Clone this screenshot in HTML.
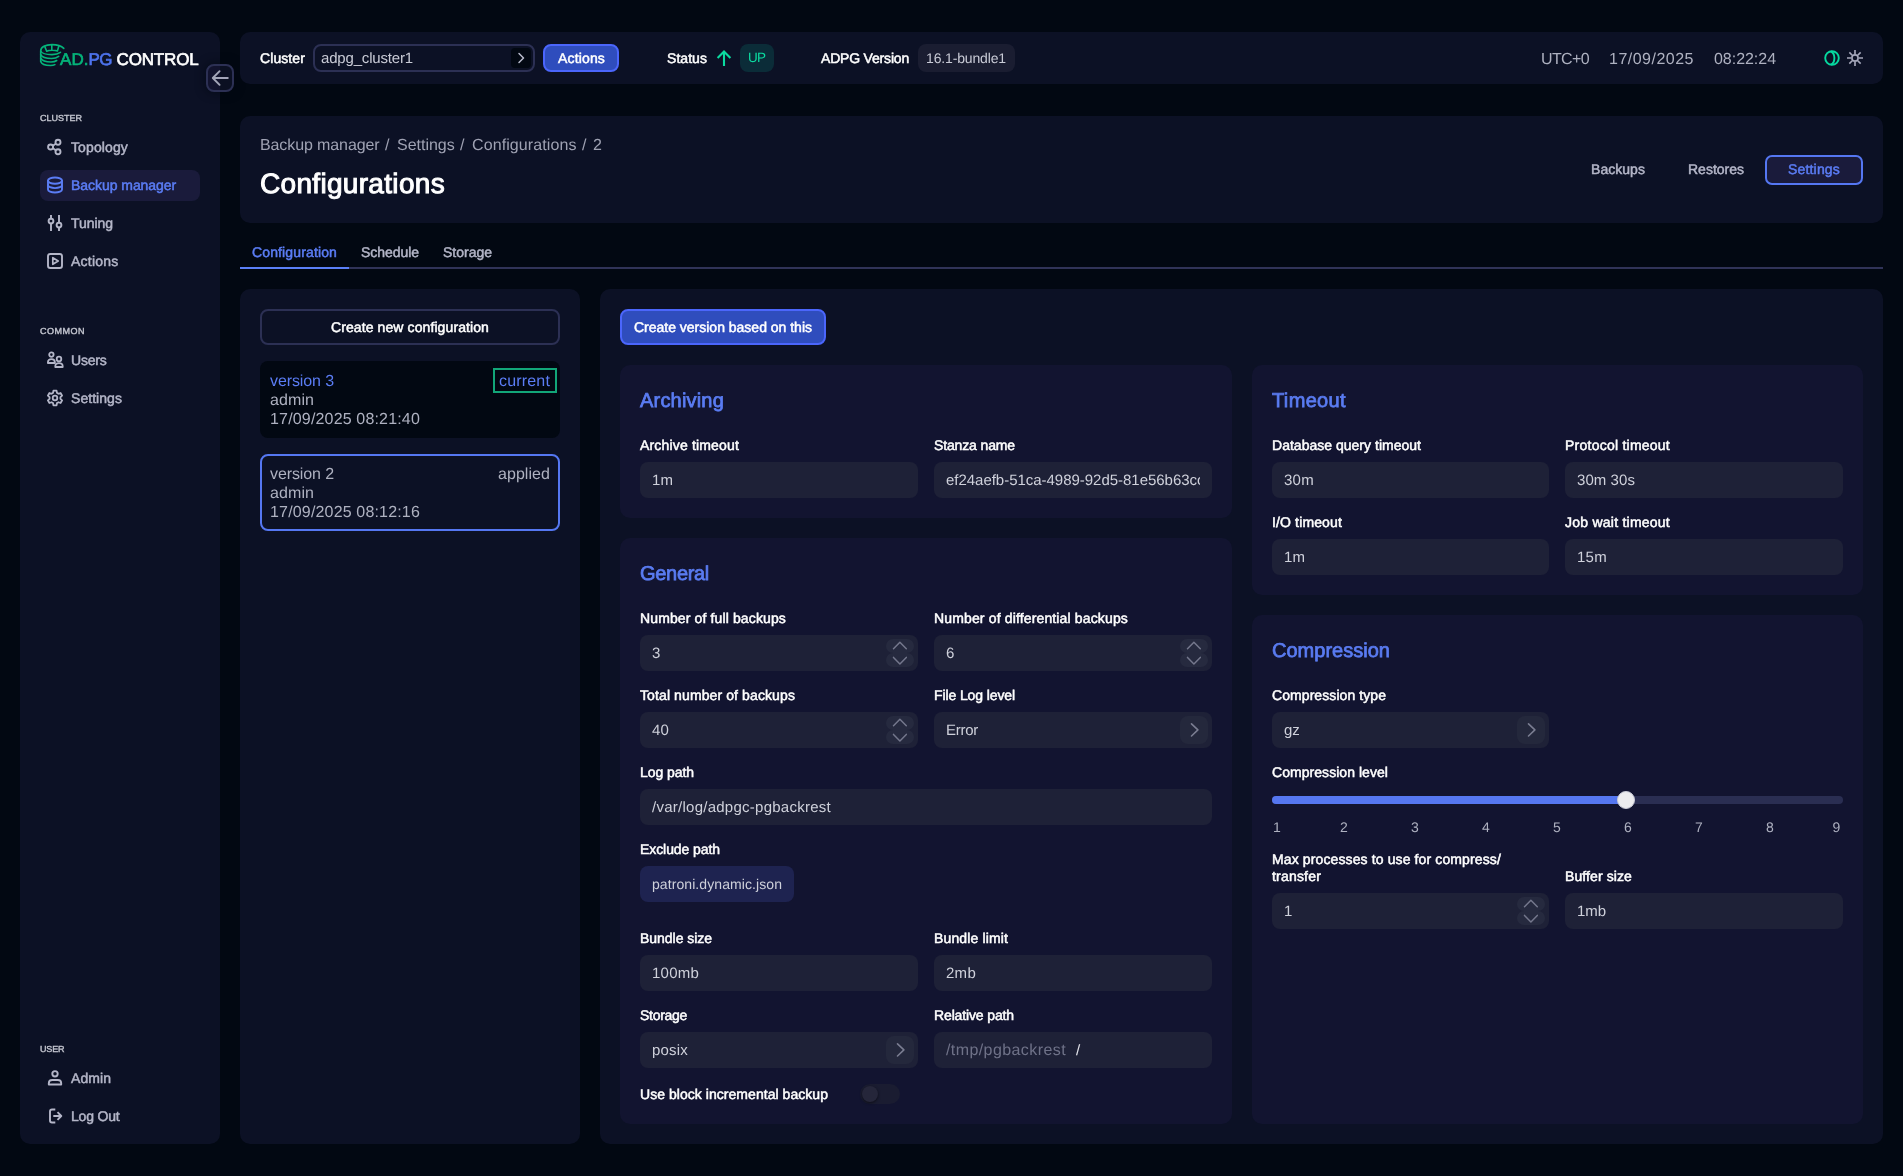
<!DOCTYPE html>
<html lang="en">
<head>
<meta charset="utf-8">
<title>ADPG Control - Configurations</title>
<style>
*{box-sizing:border-box;margin:0;padding:0}
html,body{width:1903px;height:1176px;overflow:hidden}
body{will-change:transform;text-rendering:geometricPrecision;background:#020812;font-family:"Liberation Sans",sans-serif;color:#d3d5de;position:relative;font-size:15px}
.abs{position:absolute}
.panel{position:absolute;background:#0c1125;border-radius:10px}
.card{position:absolute;background:#121430;border-radius:10px}
svg{display:block}
/* sidebar */
#sidebar{left:20px;top:32px;width:200px;height:1112px}
.sec{position:absolute;left:20px;font-size:10px;font-weight:normal;-webkit-text-stroke:0.45px currentColor;color:#c3c5cf;line-height:12px;transform:scale(.9,.875);transform-origin:0 50%}
.mi{position:absolute;left:20px;width:160px;height:31px;border-radius:8px;color:#b4b6c8;font-size:14px;font-weight:normal;-webkit-text-stroke:0.5px currentColor;line-height:30px;padding-left:31px;white-space:nowrap}
.mi svg{position:absolute;left:6px;top:6px;width:18px;height:18px}
.mi.act{background:#1a1b3b;color:#5b7df5}
.med{font-weight:normal;-webkit-text-stroke:0.5px currentColor}
.t{position:absolute;white-space:nowrap}
/* topbar */
#topbar{left:240px;top:32px;width:1643px;height:52px}
.tb{position:absolute;top:0;height:52px;line-height:52px;white-space:nowrap}
.tbb{font-weight:bold;color:#fff;font-size:14.5px}
.badge{position:absolute;top:12px;height:28px;line-height:28px;border-radius:7px;font-size:14px;text-align:center;white-space:nowrap}
/* header */
#header{left:240px;top:116px;width:1643px;height:107px}
.bc{top:20px;font-size:16px;line-height:20px;color:#9fa2b3}
/* fields */
.lbl{font-size:14px;color:#fff;line-height:17px}
.inp{position:absolute;height:36px;border-radius:8px;background:#1e2137;color:#cfd1db;font-size:15px;line-height:38px;padding-left:12px;white-space:nowrap;overflow:hidden}
.h2{position:absolute;left:20px;top:24px;font-size:20px;color:#5a7cf2;line-height:24px;white-space:nowrap;-webkit-text-stroke:0.75px currentColor}
.spin{position:absolute;right:4px;top:4px;width:28px;height:28px}
.chev{position:absolute;right:4px;top:4px;width:28px;height:28px;border-radius:8px;background:#24283c}
</style>
</head>
<body>

<!-- SIDEBAR -->
<div id="sidebar" class="panel">
  <!-- logo -->
  <svg class="abs" style="left:19px;top:11px" width="26" height="24" viewBox="0 0 26 24" fill="none" stroke="#05b47a" stroke-width="1.600" stroke-linecap="round" stroke-linejoin="round">
    <path d="M1.700 18.500V8C1.700 4 6.500 1.600 13 1.600c5 0 9.500 1.400 11.800 3.800"/>
    <path d="M1.700 8c1.300 2.500 6.300 3.600 11.300 3.600 3.500 0 6.500-.9 8.500-2.300"/>
    <path d="M1.700 11.600c1.300 2.500 6.300 3.900 10.800 3.900 3 0 5.500-.8 7.200-2.100"/>
    <path d="M1.700 15.100c1.300 2.500 5.800 3.900 10.300 3.900 2.500 0 4.500-.6 5.700-1.500"/>
    <path d="M1.700 18.500c.8 2.500 5.300 4 9.800 4 2 0 3.500-.4 4.400-.9"/>
    <path d="M12.800 2v5M5.700 3.400l2 4.800M19.700 3.500l-1.300 4.500M7.700 8.200c2.300-1.200 8.300-1.200 10.700-.2"/>
  </svg>
  <div class="abs" id="logo" style="left:40px;top:18px;font-size:17px;line-height:20px;white-space:nowrap;-webkit-text-stroke:0.65px currentColor"><span style="letter-spacing:0.052px;color:#05b47a">AD.</span><span style="letter-spacing:-0.531px;color:#4e74ef">PG</span><span style="letter-spacing:-0.168px;color:#fff"> CONTROL</span></div>

  <div class="sec" style="letter-spacing:-0.003px;top:81px">CLUSTER</div>
  <div class="mi" style="top:100px">
    <svg viewBox="0 0 18 18" fill="none" stroke="currentColor" stroke-width="1.9"><circle cx="12" cy="4.2" r="2.5"/><circle cx="4.6" cy="9" r="2.5"/><circle cx="12" cy="13.8" r="2.5"/><path d="M6.8 7.7l3-2M6.8 10.300l3 2"/></svg><span style="letter-spacing:0.119px">Topology</span></div>
  <div class="mi act" style="top:138px">
    <svg viewBox="0 0 18 18" fill="none" stroke="currentColor" stroke-width="1.9" stroke-linecap="round"><ellipse cx="9" cy="4.6" rx="7" ry="3.1"/><path d="M2 4.6v8.800c0 1.700 3.100 3.100 7 3.100s7-1.400 7-3.100V4.600"/><path d="M2 9c0 1.700 3.100 3.100 7 3.100s7-1.400 7-3.100"/></svg><span style="letter-spacing:-0.046px">Backup manager</span></div>
  <div class="mi" style="top:176px">
    <svg viewBox="0 0 18 18" fill="none" stroke="currentColor" stroke-width="1.9" stroke-linecap="butt"><path d="M5 1v3.600M5 9.600V17M13 1v7.600M13 13.600V17"/><circle cx="5" cy="7.100" r="2.400"/><circle cx="13" cy="11.100" r="2.400"/></svg><span style="letter-spacing:-0.033px">Tuning</span></div>
  <div class="mi" style="top:214px">
    <svg viewBox="0 0 18 18" fill="none" stroke="currentColor" stroke-width="1.9" stroke-linejoin="round"><rect x="2" y="2" width="14" height="14" rx="2.300"/><path d="M6.800 5.700v6.600l5.400-3.300z" stroke-width="1.700"/></svg><span style="letter-spacing:0.225px">Actions</span></div>

  <div class="sec" style="letter-spacing:0.555px;top:294px">COMMON</div>
  <div class="mi" style="top:313px">
    <svg viewBox="0 0 18 18" fill="none" stroke="currentColor" stroke-width="1.800" stroke-linejoin="round"><circle cx="5.400" cy="3.600" r="2.200"/><path d="M1.900 12v-.7c0-1.900 1.500-3.100 3.500-3.100s3.500 1.200 3.500 3.100v.7z"/><circle cx="13" cy="8" r="2.300"/><path d="M9.300 16v-.7c0-1.900 1.600-3.100 3.700-3.100s3.700 1.200 3.700 3.100v.7z"/></svg><span style="letter-spacing:-0.212px">Users</span></div>
  <div class="mi" style="top:351px">
    <svg viewBox="0 0 18 18" fill="none" stroke="currentColor" stroke-width="1.800" stroke-linejoin="round"><circle cx="9" cy="9" r="2.300"/><path d="M10.97 3.87 L10.56 1.66 L7.44 1.66 L7.03 3.87 L5.54 4.73 L3.43 3.98 L1.87 6.68 L3.57 8.14 L3.57 9.86 L1.87 11.32 L3.43 14.02 L5.54 13.27 L7.03 14.13 L7.44 16.34 L10.56 16.34 L10.97 14.13 L12.46 13.27 L14.57 14.02 L16.13 11.32 L14.43 9.86 L14.43 8.14 L16.13 6.68 L14.57 3.98 L12.46 4.73Z"/></svg><span style="letter-spacing:0.051px">Settings</span></div>

  <div class="sec" style="letter-spacing:-0.144px;top:1012px">USER</div>
  <div class="mi" style="top:1031px">
    <svg viewBox="0 0 18 18" fill="none" stroke="currentColor" stroke-width="1.900" stroke-linejoin="round"><circle cx="9" cy="4.800" r="2.700"/><path d="M2.800 15.500v-1.200c0-1.900 1.500-3.300 3.400-3.300h5.600c1.900 0 3.400 1.400 3.400 3.300v1.200z"/></svg><span style="letter-spacing:0.062px">Admin</span></div>
  <div class="mi" style="top:1069px">
    <svg viewBox="0 0 18 18" fill="none" stroke="currentColor" stroke-width="1.900" stroke-linecap="butt" stroke-linejoin="round"><path d="M9.300 2.500H6c-1.100 0-2 .9-2 2v9c0 1.100.9 2 2 2h3.300"/><path d="M7.300 9h8M11.500 5.200L15.300 9l-3.800 3.800"/></svg><span style="letter-spacing:-0.175px">Log Out</span></div>
</div>
<!-- collapse button -->
<div class="abs" style="left:206px;top:64px;width:28px;height:28px;border-radius:8px;background:linear-gradient(90deg,#12132e 0,#12132e 12px,#0b1022 12px);border:2px solid #2c3054;box-shadow:0 0 8px 2px rgba(2,8,18,.5)">
  <svg width="24" height="24" viewBox="0 0 24 24" fill="none" stroke="#a3a5b8" stroke-width="1.900" stroke-linecap="round" stroke-linejoin="round"><path d="M19.800 12H5M11.600 5.200L4.800 12l6.800 6.800"/></svg>
</div>


<!-- TOPBAR -->
<div id="topbar" class="panel">
  <span class="t med" style="letter-spacing:0.092px;left:20px;top:17px;font-size:14px;line-height:18px;color:#fff">Cluster</span>
  <div class="abs" style="left:73px;top:12px;width:222px;height:28px;border:2px solid #2c3054;border-radius:8px;background:#0c1125"></div>
  <span class="t" style="letter-spacing:-0.172px;left:81px;top:18px;font-size:15px;line-height:18px;color:#c9cbd6">adpg_cluster1</span>
  <div class="abs" style="left:271px;top:16px;width:20px;height:20px;border-radius:4px;background:#020812">
    <svg width="20" height="20" viewBox="0 0 20 20" fill="none" stroke="#b9bccd" stroke-width="1.500" stroke-linecap="round" stroke-linejoin="round"><path d="M8 5.500l4.500 4.500L8 14.500"/></svg>
  </div>
  <div class="abs" style="left:303px;top:12px;width:76px;height:28px;border-radius:8px;background:#2f4dbd;border:2px solid #4b66fc"></div>
  <span class="t med" style="letter-spacing:0.154px;left:318px;top:17px;font-size:14px;line-height:18px;color:#fff">Actions</span>

  <span class="t med" style="letter-spacing:0.049px;left:427px;top:17px;font-size:14px;line-height:18px;color:#fff">Status</span>
  <svg class="abs" style="left:475px;top:17px" width="18" height="18" viewBox="0 0 18 18" fill="none" stroke="#0bdba0" stroke-width="2.100" stroke-linecap="butt" stroke-linejoin="miter"><path d="M9 17.100V2.500M2.600 8.900L9 2.500l6.400 6.400"/></svg>
  <div class="abs" style="left:500px;top:12px;width:34px;height:28px;border-radius:8px;background:#0b2c38"></div>
  <span class="t" style="letter-spacing:-0.633px;left:508px;top:17px;font-size:13.5px;line-height:18px;color:#0bdba0">UP</span>

  <span class="t med" style="letter-spacing:-0.189px;left:581px;top:17px;font-size:14px;line-height:18px;color:#fff">ADPG Version</span>
  <div class="abs" style="left:678px;top:12px;width:97px;height:28px;border-radius:8px;background:#1a1d31"></div>
  <span class="t" style="letter-spacing:-0.146px;left:686px;top:17px;font-size:14px;line-height:18px;color:#c9cbd6">16.1-bundle1</span>

  <span class="t" style="letter-spacing:-0.625px;left:1301px;top:18px;font-size:16px;line-height:20px;color:#aeb1c0">UTC+0</span>
  <span class="t" style="letter-spacing:0.492px;left:1369px;top:18px;font-size:16px;line-height:20px;color:#aeb1c0">17/09/2025</span>
  <span class="t" style="letter-spacing:-0.035px;left:1474px;top:18px;font-size:16px;line-height:20px;color:#aeb1c0">08:22:24</span>

  <svg class="abs" style="left:1583px;top:17px" width="18" height="18" viewBox="0 0 18 18" fill="none" stroke="#06d9a0" stroke-width="1.900"><circle cx="9" cy="9" r="6.800"/><path d="M7.800 2.300C12.600 4.500 12.600 13.500 7.800 15.700"/></svg>
  <svg class="abs" style="left:1606px;top:17px" width="18" height="18" viewBox="0 0 18 18" fill="none" stroke="#a6a8bb" stroke-width="1.650" stroke-linecap="butt"><circle cx="9" cy="9" r="3.100"/><path d="M12.90 9.00L17.00 9.00M11.76 11.76L14.66 14.66M9.00 12.90L9.00 17.00M6.24 11.76L3.34 14.66M5.10 9.00L1.00 9.00M6.24 6.24L3.34 3.34M9.00 5.10L9.00 1.00M11.76 6.24L14.66 3.34"/></svg>
</div>


<!-- HEADER -->
<div id="header" class="panel">
  <span class="t bc" style="letter-spacing:-0.105px;left:20px">Backup manager</span>
  <span class="t bc" style="left:145px">/</span>
  <span class="t bc" style="letter-spacing:-0.014px;left:157px">Settings</span>
  <span class="t bc" style="left:220px">/</span>
  <span class="t bc" style="letter-spacing:0.095px;left:232px">Configurations</span>
  <span class="t bc" style="left:342px">/</span>
  <span class="t bc" style="left:353px">2</span>
  <span class="t" style="letter-spacing:0.317px;left:20px;top:51px;font-size:28px;line-height:34px;color:#fff;-webkit-text-stroke:1px #fff">Configurations</span>
  <span class="t med" style="letter-spacing:0.042px;left:1351px;top:44px;font-size:14px;line-height:18px;color:#b4b6c8">Backups</span>
  <span class="t med" style="letter-spacing:-0.004px;left:1448px;top:44px;font-size:14px;line-height:18px;color:#b4b6c8">Restores</span>
  <div class="abs" style="left:1525px;top:39px;width:98px;height:30px;border-radius:7px;border:2px solid #5577f2;background:#1a1b3b"></div>
  <span class="t med" style="letter-spacing:0.176px;left:1548px;top:44px;font-size:14px;line-height:18px;color:#5b7df5">Settings</span>
</div>


<!-- TABS -->
<div id="tabs" class="abs" style="left:240px;top:236px;width:1643px;height:33px">
  <div class="abs" style="left:0;top:31px;width:1643px;height:2px;background:#303358"></div>
  <div class="abs" style="left:0;top:31px;width:109px;height:2px;background:#5b80f8"></div>
  <span class="t med" style="letter-spacing:0.132px;left:12px;top:7px;font-size:14px;line-height:18px;color:#5b7df5">Configuration</span>
  <span class="t med" style="letter-spacing:-0.049px;left:121px;top:7px;font-size:14px;line-height:18px;color:#b4b6c8">Schedule</span>
  <span class="t med" style="letter-spacing:-0.007px;left:203px;top:7px;font-size:14px;line-height:18px;color:#b4b6c8">Storage</span>
</div>


<!-- LEFT PANEL -->
<div id="left" class="panel" style="left:240px;top:289px;width:340px;height:855px;border-top:1px solid transparent">
  <div class="abs" style="left:20px;top:19px;width:300px;height:36px;border:2px solid #2c3054;border-radius:8px"></div>
  <span class="t med" style="letter-spacing:0.098px;left:91px;top:28px;font-size:14px;line-height:18px;color:#fff">Create new configuration</span>

  <div class="abs" style="left:20px;top:71px;width:300px;height:77px;border-radius:8px;background:#020812"></div>
  <span class="t" style="letter-spacing:-0.102px;left:30px;top:82px;font-size:16px;line-height:20px;color:#5b7df5">version 3</span>
  <div class="abs" style="left:253px;top:78px;width:64px;height:25px;border:2px solid #12a678"></div>
  <span class="t" style="letter-spacing:0.172px;left:259px;top:82px;font-size:16px;line-height:20px;color:#5b7df5">current</span>
  <span class="t" style="letter-spacing:0.084px;left:30px;top:101px;font-size:16px;line-height:20px;color:#aeb1c0">admin</span>
  <span class="t" style="letter-spacing:0.168px;left:30px;top:120px;font-size:16px;line-height:20px;color:#aeb1c0">17/09/2025 08:21:40</span>

  <div class="abs" style="left:20px;top:164px;width:300px;height:77px;border-radius:8px;border:2px solid #5577f2"></div>
  <span class="t" style="letter-spacing:-0.102px;left:30px;top:175px;font-size:16px;line-height:20px;color:#aeb1c0">version 2</span>
  <span class="t" style="letter-spacing:0.056px;left:258px;top:175px;font-size:16px;line-height:20px;color:#aeb1c0">applied</span>
  <span class="t" style="letter-spacing:0.084px;left:30px;top:194px;font-size:16px;line-height:20px;color:#aeb1c0">admin</span>
  <span class="t" style="letter-spacing:0.168px;left:30px;top:213px;font-size:16px;line-height:20px;color:#aeb1c0">17/09/2025 08:12:16</span>
</div>


<!-- RIGHT PANEL -->
<div id="right" class="panel" style="left:600px;top:289px;width:1283px;height:855px;border-top:1px solid transparent">
  <div class="abs" style="left:20px;top:19px;width:206px;height:36px;border-radius:8px;background:#2f4dbd;border:2px solid #4b66fc"></div>
  <span class="t med" style="letter-spacing:-0.008px;left:34px;top:28px;font-size:14px;line-height:18px;color:#fff">Create version based on this</span>
<div class="card" style="left:20px;top:75px;width:612px;height:153px">
  <span class="h2 med" style="letter-spacing:0.193px">Archiving</span>
  <span class="t med lbl" style="letter-spacing:0.168px;left:20px;top:72px">Archive timeout</span>
  <div class="inp" style="left:20px;top:97px;width:278px"><span style="letter-spacing:0.078px">1m</span></div>
  <span class="t med lbl" style="letter-spacing:-0.136px;left:314px;top:72px">Stanza name</span>
  <div class="inp" style="left:314px;top:97px;width:278px"><div style="width:254px;overflow:hidden"><span style="letter-spacing:-0.026px">ef24aefb-51ca-4989-92d5-81e56b63cc11</span></div></div>
</div>
<div class="card" style="left:20px;top:248px;width:612px;height:586px">
  <span class="h2 med" style="letter-spacing:-0.308px">General</span>
  <span class="t med lbl" style="letter-spacing:0.128px;left:20px;top:72px">Number of full backups</span>
  <div class="inp" style="left:20px;top:97px;width:278px"><span style="letter-spacing:-0.344px">3</span><svg class="spin" viewBox="0 0 28 28" fill="none" stroke="#74778c" stroke-width="1.500" stroke-linecap="round" stroke-linejoin="round"><rect x="0" y="0" width="28" height="14" rx="7" fill="#262a3f" stroke="none"/><rect x="0" y="14" width="28" height="14" rx="7" fill="#262a3f" stroke="none"/><path d="M7.500 9.800l6.400-6.600 6.400 6.600M7.500 18.400l6.400 6.600 6.400-6.600"/></svg></div>
  <span class="t med lbl" style="letter-spacing:0.146px;left:314px;top:72px">Number of differential backups</span>
  <div class="inp" style="left:314px;top:97px;width:278px"><span style="letter-spacing:-0.344px">6</span><svg class="spin" viewBox="0 0 28 28" fill="none" stroke="#74778c" stroke-width="1.500" stroke-linecap="round" stroke-linejoin="round"><rect x="0" y="0" width="28" height="14" rx="7" fill="#262a3f" stroke="none"/><rect x="0" y="14" width="28" height="14" rx="7" fill="#262a3f" stroke="none"/><path d="M7.500 9.800l6.400-6.600 6.400 6.600M7.500 18.400l6.400 6.600 6.400-6.600"/></svg></div>
  <span class="t med lbl" style="letter-spacing:0.107px;left:20px;top:149px">Total number of backups</span>
  <div class="inp" style="left:20px;top:174px;width:278px"><span style="letter-spacing:0.156px">40</span><svg class="spin" viewBox="0 0 28 28" fill="none" stroke="#74778c" stroke-width="1.500" stroke-linecap="round" stroke-linejoin="round"><rect x="0" y="0" width="28" height="14" rx="7" fill="#262a3f" stroke="none"/><rect x="0" y="14" width="28" height="14" rx="7" fill="#262a3f" stroke="none"/><path d="M7.500 9.800l6.400-6.600 6.400 6.600M7.500 18.400l6.400 6.600 6.400-6.600"/></svg></div>
  <span class="t med lbl" style="letter-spacing:-0.107px;left:314px;top:149px">File Log level</span>
  <div class="inp" style="left:314px;top:174px;width:278px"><span style="letter-spacing:-0.269px">Error</span><div class="chev"><svg width="28" height="28" viewBox="0 0 28 28" fill="none" stroke="#7a7d91" stroke-width="1.600" stroke-linecap="round" stroke-linejoin="round"><path d="M11.500 7.800l6.400 6.100-6.400 6.100"/></svg></div></div>
  <span class="t med lbl" style="letter-spacing:-0.062px;left:20px;top:226px">Log path</span>
  <div class="inp" style="left:20px;top:251px;width:572px"><span style="letter-spacing:0.256px">/var/log/adpgc-pgbackrest</span></div>
  <span class="t med lbl" style="letter-spacing:-0.079px;left:20px;top:303px">Exclude path</span>
  <div class="inp" style="left:20px;top:328px;width:154px;background:#1e2350;font-size:14px;line-height:36px"><span style="letter-spacing:0.080px">patroni.dynamic.json</span></div>
  <span class="t med lbl" style="letter-spacing:-0.036px;left:20px;top:392px">Bundle size</span>
  <div class="inp" style="left:20px;top:417px;width:278px"><span style="letter-spacing:0.225px">100mb</span></div>
  <span class="t med lbl" style="letter-spacing:0.135px;left:314px;top:392px">Bundle limit</span>
  <div class="inp" style="left:314px;top:417px;width:278px"><span style="letter-spacing:0.271px">2mb</span></div>
  <span class="t med lbl" style="letter-spacing:-0.292px;left:20px;top:469px">Storage</span>
  <div class="inp" style="left:20px;top:494px;width:278px"><span style="letter-spacing:0.194px">posix</span><div class="chev"><svg width="28" height="28" viewBox="0 0 28 28" fill="none" stroke="#7a7d91" stroke-width="1.600" stroke-linecap="round" stroke-linejoin="round"><path d="M11.500 7.800l6.400 6.100-6.400 6.100"/></svg></div></div>
  <span class="t med lbl" style="letter-spacing:-0.132px;left:314px;top:469px">Relative path</span>
  <div class="inp" style="left:314px;top:494px;width:278px"><span style="letter-spacing:0.411px;color:#6f7288;font-size:16px">/tmp/pgbackrest</span><span style="color:#e4e5ec;margin-left:10px">/</span></div>
  <span class="t med lbl" style="letter-spacing:0.044px;left:20px;top:548px">Use block incremental backup</span>
  <div class="abs" style="left:240px;top:546px;width:40px;height:20px;border-radius:10px;background:#1a1c31"></div>
  <div class="abs" style="left:242px;top:548px;width:16px;height:16px;border-radius:8px;background:#25263a;box-shadow:0 1px 3px rgba(0,0,0,.55)"></div>
</div>
<div class="card" style="left:652px;top:75px;width:611px;height:230px">
  <span class="h2 med" style="letter-spacing:0.355px">Timeout</span>
  <span class="t med lbl" style="letter-spacing:0.016px;left:20px;top:72px">Database query timeout</span>
  <div class="inp" style="left:20px;top:97px;width:277px"><span style="letter-spacing:0.271px">30m</span></div>
  <span class="t med lbl" style="letter-spacing:0.239px;left:313px;top:72px">Protocol timeout</span>
  <div class="inp" style="left:313px;top:97px;width:278px"><span style="letter-spacing:0.065px">30m 30s</span></div>
  <span class="t med lbl" style="letter-spacing:0.139px;left:20px;top:149px">I/O timeout</span>
  <div class="inp" style="left:20px;top:174px;width:277px"><span style="letter-spacing:0.078px">1m</span></div>
  <span class="t med lbl" style="letter-spacing:0.239px;left:313px;top:149px">Job wait timeout</span>
  <div class="inp" style="left:313px;top:174px;width:278px"><span style="letter-spacing:0.271px">15m</span></div>
</div>
<div class="card" style="left:652px;top:325px;width:611px;height:509px">
  <span class="h2 med" style="letter-spacing:0.016px">Compression</span>
  <span class="t med lbl" style="letter-spacing:0.073px;left:20px;top:72px">Compression type</span>
  <div class="inp" style="left:20px;top:97px;width:277px"><span style="letter-spacing:-0.172px">gz</span><div class="chev"><svg width="28" height="28" viewBox="0 0 28 28" fill="none" stroke="#7a7d91" stroke-width="1.600" stroke-linecap="round" stroke-linejoin="round"><path d="M11.500 7.800l6.400 6.100-6.400 6.100"/></svg></div></div>
  <span class="t med lbl" style="letter-spacing:0.049px;left:20px;top:149px">Compression level</span>
  <div class="abs" style="left:20px;top:181px;width:571px;height:8px;border-radius:4px;background:#2a2e52"></div>
  <div class="abs" style="left:20px;top:181px;width:358px;height:8px;border-radius:4px;background:#5577f0"></div>
  <div class="abs" style="left:365px;top:176px;width:18px;height:18px;border-radius:9px;background:#ececee;border:1px solid #c9cbd6"></div>
  <span class="t" style="left:15px;top:203px;width:20px;text-align:center;font-size:14px;line-height:18px;color:#aeb1c0">1</span>
  <span class="t" style="left:82px;top:203px;width:20px;text-align:center;font-size:14px;line-height:18px;color:#aeb1c0">2</span>
  <span class="t" style="left:153px;top:203px;width:20px;text-align:center;font-size:14px;line-height:18px;color:#aeb1c0">3</span>
  <span class="t" style="left:224px;top:203px;width:20px;text-align:center;font-size:14px;line-height:18px;color:#aeb1c0">4</span>
  <span class="t" style="left:295px;top:203px;width:20px;text-align:center;font-size:14px;line-height:18px;color:#aeb1c0">5</span>
  <span class="t" style="left:366px;top:203px;width:20px;text-align:center;font-size:14px;line-height:18px;color:#aeb1c0">6</span>
  <span class="t" style="left:437px;top:203px;width:20px;text-align:center;font-size:14px;line-height:18px;color:#aeb1c0">7</span>
  <span class="t" style="left:508px;top:203px;width:20px;text-align:center;font-size:14px;line-height:18px;color:#aeb1c0">8</span>
  <span class="t" style="left:574.5px;top:203px;width:20px;text-align:center;font-size:14px;line-height:18px;color:#aeb1c0">9</span>
  <span class="t med lbl" style="letter-spacing:0.121px;left:20px;top:236px">Max processes to use for compress/</span>
  <span class="t med lbl" style="letter-spacing:0.191px;left:20px;top:253px">transfer</span>
  <div class="inp" style="left:20px;top:278px;width:277px"><span style="letter-spacing:-0.344px">1</span><svg class="spin" viewBox="0 0 28 28" fill="none" stroke="#74778c" stroke-width="1.500" stroke-linecap="round" stroke-linejoin="round"><rect x="0" y="0" width="28" height="14" rx="7" fill="#262a3f" stroke="none"/><rect x="0" y="14" width="28" height="14" rx="7" fill="#262a3f" stroke="none"/><path d="M7.500 9.800l6.400-6.600 6.400 6.600M7.500 18.400l6.400 6.600 6.400-6.600"/></svg></div>
  <span class="t med lbl" style="letter-spacing:0.101px;left:313px;top:253px">Buffer size</span>
  <div class="inp" style="left:313px;top:278px;width:278px"><span style="letter-spacing:-0.062px">1mb</span></div>
</div>
</div>


</body>
</html>
